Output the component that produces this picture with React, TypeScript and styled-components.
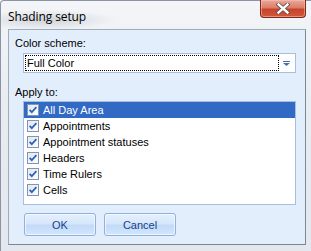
import React, { useState } from 'react';
import styled, { createGlobalStyle } from 'styled-components';

const GlobalStyle = createGlobalStyle`
  html, body {
    margin: 0;
    padding: 0;
    background: #ffffff;
  }
`;

const uiFont = `"Liberation Sans", Arial, sans-serif`;

// Window frame (Aero glass)
const Window = styled.div`
  width: 311px;
  height: 251px;
  box-sizing: border-box;
  display: flex;
  flex-direction: column;
  padding: 0 5px 6px 7px;
  background:
    radial-gradient(ellipse 70px 10px at 45px 19px, rgba(120, 130, 140, 0.28), transparent),
    linear-gradient(180deg, #f3f5f8 0%, #e9edf2 40%, #e4e8ee 100%);
  border-left: 1px solid #8a94a2;
  border-top: 1px solid #8a94a2;
  border-top-left-radius: 4px;
  font-family: ${uiFont};
`;

const TitleBar = styled.div`
  height: 28px;
  display: flex;
  align-items: flex-start;
  justify-content: space-between;
`;

const Title = styled.div`
  margin-top: 7px;
  font-family: "Open Sans", "Noto Sans", sans-serif;
  font-size: 12px;
  color: #000;
  letter-spacing: -0.1px;
`;

const CloseButton = styled.div`
  width: 46px;
  height: 18px;
  margin-top: -1px;
  box-sizing: border-box;
  border: 1px solid #7a2a1a;
  border-top: none;
  border-radius: 0 0 4px 4px;
  background: linear-gradient(180deg, #e9a899 0%, #dc7e69 45%, #c8432b 55%, #d2573b 100%);
  box-shadow: inset 0 0 0 1px rgba(255, 200, 190, 0.5);
  display: flex;
  align-items: center;
  justify-content: center;
`;

const Client = styled.div`
  flex: 1;
  background: #e3eefd;
  border: 1px solid #7c8796;
  border-top-color: #a3abb6;
  border-left-color: #a3abb6;
  display: flex;
  flex-direction: column;
  padding: 7px 9px 0 6px;
`;

const Label = styled.div<{ $gap: number }>`
  font-size: 11px;
  line-height: 13px;
  color: #000;
  margin-bottom: ${p => p.$gap}px;
`;

const Combo = styled.div`
  margin-left: 8px;
  height: 20px;
  box-sizing: border-box;
  background: #fff;
  border: 1px solid #a7bedd;
  display: flex;
  align-items: stretch;
  padding: 1px;
  margin-bottom: 13px;
`;

const ComboText = styled.div`
  flex: 1;
  border: 1px dotted #000;
  font-size: 11px;
  line-height: 14px;
  padding-left: 1px;
  color: #000;
`;

const ComboArrow = styled.div`
  width: 15px;
  display: flex;
  align-items: center;
  justify-content: center;
`;

const ListBox = styled.div`
  margin-left: 8px;
  height: 104px;
  box-sizing: border-box;
  background: #fff;
  border: 1px solid #a7bedd;
  margin-bottom: 8px;
`;

const Row = styled.div<{ $selected?: boolean }>`
  height: 16px;
  display: flex;
  align-items: center;
  gap: 4px;
  padding-left: 3px;
  font-size: 11px;
  color: ${p => (p.$selected ? '#fff' : '#000')};
  background: ${p => (p.$selected ? '#316ac5' : 'transparent')};
  cursor: default;
`;

const Buttons = styled.div`
  display: flex;
  gap: 8px;
  margin-left: 9px;
`;

const Button = styled.button`
  width: 72px;
  height: 23px;
  box-sizing: border-box;
  border: 1px solid #8eb1e0;
  border-radius: 3px;
  background: linear-gradient(180deg, #e5f0fd 0%, #d6e7fb 45%, #c3dbf8 55%, #d3e6fc 100%);
  box-shadow: inset 0 0 0 1px rgba(255, 255, 255, 0.6);
  font-family: ${uiFont};
  font-size: 11px;
  color: #15428b;
  padding: 0;
`;

const CheckBox: React.FC = () => (
  <svg width="12" height="12" viewBox="0 0 12 12">
    <defs>
      <linearGradient id="cbg" x1="0" y1="0" x2="1" y2="1">
        <stop offset="0" stopColor="#dfe5ee" />
        <stop offset="1" stopColor="#ffffff" />
      </linearGradient>
    </defs>
    <rect x="0.5" y="0.5" width="11" height="11" fill="#f4f6fa" stroke="#8094b3" />
    <rect x="1.5" y="1.5" width="9" height="9" fill="url(#cbg)" />
    <path d="M2.6 5.8 L4.8 8.2 L9.4 3.2" fill="none" stroke="#2f63b5" strokeWidth="1.8" />
  </svg>
);

const items = [
  'All Day Area',
  'Appointments',
  'Appointment statuses',
  'Headers',
  'Time Rulers',
  'Cells',
];

export default function App() {
  const [selected, setSelected] = useState(0);

  return (
    <>
      <GlobalStyle />
      <Window>
        <TitleBar>
          <Title>Shading setup</Title>
          <CloseButton>
            <svg width="14" height="11" viewBox="0 0 14 11">
              <path d="M2.5 1.5 L11.5 9.5 M11.5 1.5 L2.5 9.5" stroke="#5a4a48" strokeWidth="4" strokeLinecap="square" />
              <path d="M2.5 1.5 L11.5 9.5 M11.5 1.5 L2.5 9.5" stroke="#ffffff" strokeWidth="2.4" strokeLinecap="square" />
            </svg>
          </CloseButton>
        </TitleBar>
        <Client>
          <Label $gap={3}>Color scheme:</Label>
          <Combo>
            <ComboText>Full Color</ComboText>
            <ComboArrow>
              <svg width="7" height="5" viewBox="0 0 7 5">
                <rect x="0" y="0" width="7" height="1" fill="#4a6fa8" />
                <path d="M0 2 H7 L3.5 5 Z" fill="#4a6fa8" />
              </svg>
            </ComboArrow>
          </Combo>
          <Label $gap={2}>Apply to:</Label>
          <ListBox>
            {items.map((item, i) => (
              <Row key={item} $selected={i === selected} onClick={() => setSelected(i)}>
                <CheckBox />
                <span>{item}</span>
              </Row>
            ))}
          </ListBox>
          <Buttons>
            <Button>OK</Button>
            <Button>Cancel</Button>
          </Buttons>
        </Client>
      </Window>
    </>
  );
}
